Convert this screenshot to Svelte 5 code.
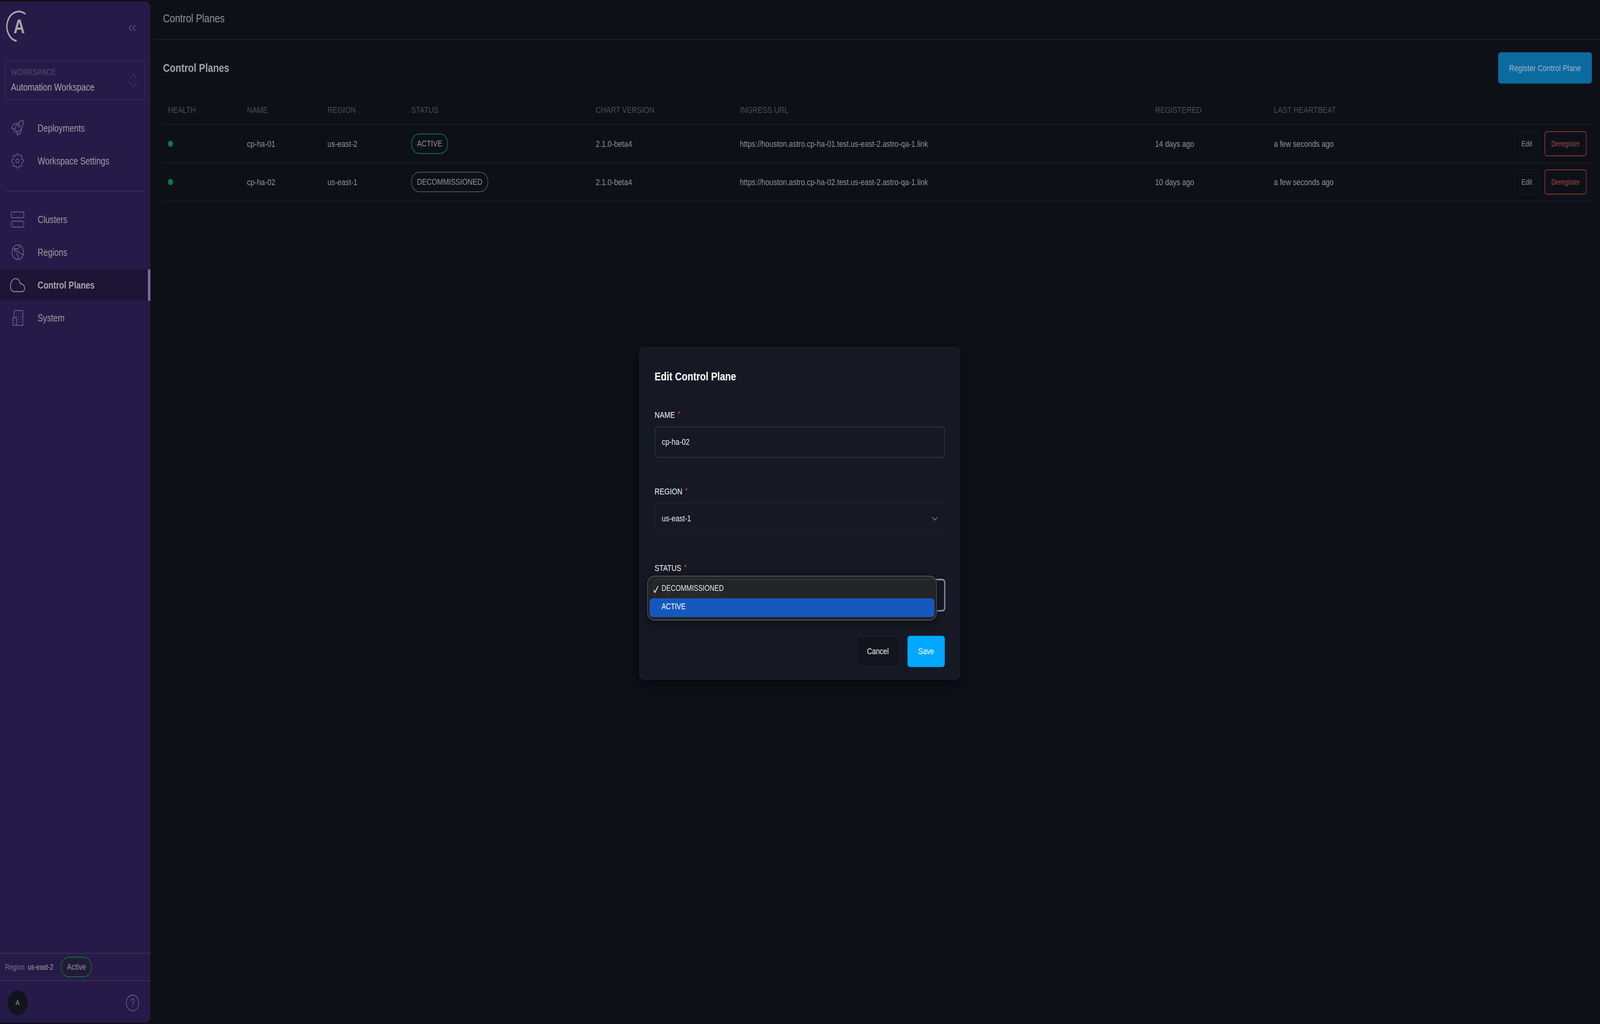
<script>
  // design size of the screen; the page is fitted to the real window below
  // (the window can come out narrower than asked for, 4096 instead of 5106)
  const DESIGN_W = 5106;
  const DESIGN_H = 2622;

  let innerWidth = $state(window.innerWidth);
  let innerHeight = $state(window.innerHeight);
  let fit = $derived(`transform: scale(${innerWidth / DESIGN_W}, ${innerHeight / DESIGN_H})`);

  const mainNav = [
    { label: 'Deployments', icon: 'rocket' },
    { label: 'Workspace Settings', icon: 'cog' }
  ];
  const adminNav = [
    { label: 'Clusters', icon: 'server' },
    { label: 'Regions', icon: 'globe' },
    { label: 'Control Planes', icon: 'cloud', active: true },
    { label: 'System', icon: 'building' }
  ];
  const columns = ['Health', 'Name', 'Region', 'Status', 'Chart Version', 'Ingress URL', 'Registered', 'Last Heartbeat', ''];
  const colWidths = [252, 257, 267, 589, 460, 1325, 379, 500];
  const planes = [
    { name: 'cp-ha-01', region: 'us-east-2', status: 'ACTIVE', chart: '2.1.0-beta4', url: 'https://houston.astro.cp-ha-01.test.us-east-2.astro-qa-1.link', registered: '14 days ago', beat: 'a few seconds ago' },
    { name: 'cp-ha-02', region: 'us-east-1', status: 'DECOMMISSIONED', chart: '2.1.0-beta4', url: 'https://houston.astro.cp-ha-02.test.us-east-2.astro-qa-1.link', registered: '10 days ago', beat: 'a few seconds ago' }
  ];
</script>

<svelte:window bind:innerWidth bind:innerHeight />

{#snippet navIcon(name)}
  {#if name === 'rocket'}
    <svg class="nav-icon" viewBox="26 298 60 60">
      <path d="M74 309C66 309 59 313 54 318C50 323 47 328 47 331L55 338C59 337 64 334 68 329C72 324 75 316 74 309Z" />
      <path d="M53 317C48 316 45 317 43 319L37 328L47 331" />
      <path d="M68 330C68 335 67 339 65 341L55 346L53 336" />
      <path d="M43.300 335l5 5" />
      <circle cx="60.700" cy="321.700" r="3.700" />
    </svg>
  {:else if name === 'cog'}
    <svg class="nav-icon" viewBox="-2.500 -2.500 29 29" style="stroke-width:.9">
      <path d="M10.325 4.317c.426-1.756 2.924-1.756 3.35 0a1.724 1.724 0 002.573 1.066c1.543-.94 3.31.826 2.37 2.37a1.724 1.724 0 001.065 2.572c1.756.426 1.756 2.924 0 3.35a1.724 1.724 0 00-1.066 2.573c.94 1.543-.826 3.31-2.37 2.37a1.724 1.724 0 00-2.572 1.065c-.426 1.756-2.924 1.756-3.35 0a1.724 1.724 0 00-2.573-1.066c-1.543.94-3.31-.826-2.37-2.37a1.724 1.724 0 00-1.065-2.572c-1.756-.426-1.756-2.924 0-3.35a1.724 1.724 0 001.066-2.573c-.94-1.543.826-3.31 2.370-2.370.996.608 2.296.07 2.572-1.065z" />
      <path d="M14.500 12a2.500 2.500 0 11-5 0 2.500 2.500 0 015 0z" />
    </svg>
  {:else if name === 'server'}
    <svg class="nav-icon" viewBox="26 532 60 60">
      <rect x="36" y="542.500" width="40" height="15" rx="4" />
      <rect x="36" y="566.500" width="40" height="15" rx="4" />
      <path d="M44 550h.3M44 574h.3" />
    </svg>
  {:else if name === 'globe'}
    <svg class="nav-icon" viewBox="26 616 60 60">
      <circle cx="56.700" cy="646" r="18.500" />
      <path d="M63.500 628C63 633 60 636 56 637C52 638 47 636 45 636C48 639 48 641 46 643C50 642 56 642 60 645C64 648 68 650 74 653" />
      <path d="M55 648C52 650 55 653 58 655C59 658 57 660 58 664" />
    </svg>
  {:else if name === 'cloud'}
    <svg class="nav-icon" viewBox="26 700 60 60">
      <path d="M45 746.700C38 746.700 33.300 741 33.300 733C33.300 722 41 713.300 50 713.300C57 713.300 62 718 65 727C72 726 78.700 731 78.700 738C78.700 743 75 746.700 70 746.700Z" />
    </svg>
  {:else if name === 'building'}
    <svg class="nav-icon" viewBox="26 784 60 60">
      <path d="M45 813V798a3 3 0 013-3h22a3 3 0 013 3V833H41V816a3 3 0 013-3h6a3 3 0 013 3V833" />
      <path d="M51.700 803.300h.3M59 803.300h.3M65.700 803.300h.3M51.700 810.700h.3M59 810.700h.3M65.700 810.700h.3M59 817.300h.3M65.700 817.300h.3M59 824.700h.3M65.700 824.700h.3M47 819.300h.3M47 826.700h.3" />
    </svg>
  {/if}
{/snippet}

<div class="app" style={fit}>
  <aside class="sidebar">
    <div class="brand">
      <svg class="logo" viewBox="0 0 100 110">
        <path d="M81 36A38 38 0 1 0 53 105" />
        <text x="43" y="85">A</text>
      </svg>
      <svg class="collapse" viewBox="0 0 24 18">
        <path d="M10 1.500 2 9l8 7.500M22 1.500 14 9l8 7.500" />
      </svg>
    </div>

    <div class="workspace">
      <div>
        <div class="ws-label">WORKSPACE</div>
        <div class="ws-name">Automation Workspace</div>
      </div>
      <svg class="updown" viewBox="0 0 26 34">
        <path d="M1 13 13 1l12 12M1 21l12 12 12-12" />
      </svg>
    </div>

    <nav class="nav first">
      {#each mainNav as item}
        <div class="nav-item">
          {@render navIcon(item.icon)}
          <span>{item.label}</span>
        </div>
      {/each}
    </nav>

    <div class="side-rule"></div>

    <nav class="nav">
      {#each adminNav as item}
        <div class="nav-item" class:active={item.active}>
          {@render navIcon(item.icon)}
          <span>{item.label}</span>
        </div>
      {/each}
    </nav>

    <div class="side-foot">
      <div class="region-row">
        <span class="region-key">Region</span>
        <span class="region-val">us-east-2</span>
        <span class="region-badge">Active</span>
      </div>
      <div class="user-row">
        <div class="avatar">A</div>
        <svg class="help" viewBox="0 0 42 42">
          <circle cx="21" cy="21" r="20" />
          <path d="M15.500 16c0-3.500 2.500-5.500 5.500-5.500s5.500 2 5.500 5c0 4.500-5.500 4.500-5.500 9" />
          <path d="M21 30.500h.1" class="dot" />
        </svg>
      </div>
    </div>
  </aside>

  <main class="main">
    <header class="topbar">Control Planes</header>
    <section class="content">
      <div class="title-row">
        <h1>Control Planes</h1>
        <button class="register">Register Control Plane</button>
      </div>

      <table>
        <colgroup>
          {#each colWidths as w}<col style="width:{w}px" />{/each}
          <col />
        </colgroup>
        <thead>
          <tr>
            {#each columns as col}<th>{col}</th>{/each}
          </tr>
        </thead>
        <tbody>
          {#each planes as plane}
            <tr>
              <td><span class="dot-ok"></span></td>
              <td>{plane.name}</td>
              <td>{plane.region}</td>
              <td><span class="pill" class:ok={plane.status === 'ACTIVE'}>{plane.status}</span></td>
              <td>{plane.chart}</td>
              <td>{plane.url}</td>
              <td>{plane.registered}</td>
              <td>{plane.beat}</td>
              <td class="actions">
                <button class="edit">Edit</button>
                <button class="deregister">Deregister</button>
              </td>
            </tr>
          {/each}
        </tbody>
      </table>
    </section>
  </main>

  <div class="overlay">
    <div class="modal">
      <h2>Edit Control Plane</h2>

      <div class="label first-label">NAME <i>*</i></div>
      <div class="field name">cp-ha-02</div>

      <div class="label">REGION <i>*</i></div>
      <div class="field select">
        <span>us-east-1</span>
        <svg class="chev" viewBox="0 0 18 10"><path d="M1 1l8 8 8-8" /></svg>
      </div>

      <div class="label">STATUS <i>*</i></div>
      <div class="field focused">
        <span>DECOMMISSIONED</span>
        <div class="popup">
          <div class="option checked">
            <svg class="check" viewBox="0 0 18 18"><path d="M2 11l4 6L16 1" /></svg>
            DECOMMISSIONED
          </div>
          <div class="option hover">ACTIVE</div>
        </div>
      </div>

      <div class="modal-actions">
        <button class="cancel">Cancel</button>
        <button class="save">Save</button>
      </div>
    </div>
  </div>
</div>

<style>
  :global(html), :global(body) {
    margin: 0;
    overflow: hidden;
    background: #0e1018;
  }

  .app {
    display: flex;
    width: 5106px;
    height: 2622px;
    overflow: hidden;
    position: relative;
    transform-origin: 0 0;
    background: #0e1018;
    font-family: 'Liberation Sans', Arial, sans-serif;
    color: #8e8f92;
    font-size: 22.4px;
  }

  button {
    font-family: inherit;
    cursor: pointer;
  }

  /* sidebar */
  .sidebar {
    width: 480px;
    flex: none;
    margin: 4px 0;
    background: #261b48;
    border-radius: 0 16px 16px 0;
    display: flex;
    flex-direction: column;
    box-sizing: border-box;
  }

  .brand {
    height: 152px;
    flex: none;
    display: flex;
    justify-content: space-between;
    align-items: flex-start;
    box-sizing: border-box;
    padding: 0 46px 0 0;
  }

  .logo {
    width: 100px;
    height: 110px;
    margin-top: -4px;
  }
  .logo path {
    fill: none;
    stroke: #a5a5a8;
    stroke-width: 4.500;
  }
  .logo text {
    font-family: 'Liberation Sans', Arial, sans-serif;
    font-size: 50px;
    fill: #a5a5a8;
    font-weight: 700;
  }

  .collapse {
    width: 24px;
    height: 18px;
    margin-top: 59px;
    fill: none;
    stroke: #6f6290;
    stroke-width: 1.800;
  }

  .workspace {
    flex: none;
    margin: 0 16px;
    height: 100px;
    box-sizing: border-box;
    border: 2px solid #372c56;
    border-radius: 8px;
    padding: 0 24px 0 17px;
    display: flex;
    align-items: center;
    justify-content: space-between;
  }
  .ws-label {
    font-size: 22.4px;
    line-height: 30px;
    color: #54496e;
    margin-top: -2px;
  }
  .ws-name {
    font-size: 25.800px;
    line-height: 36px;
    margin-top: 5px;
    color: #a3a3a6;
  }
  .updown {
    width: 26px;
    height: 34px;
    fill: none;
    stroke: #40345f;
    stroke-width: 1.800;
  }

  .nav {
    display: flex;
    flex-direction: column;
    gap: 4px;
    flex: none;
  }
  .nav.first {
    margin-top: 32px;
  }

  .nav-item {
    height: 80px;
    display: flex;
    align-items: center;
    padding-left: 26px;
    gap: 34px;
    font-size: 25.800px;
    color: #9a9a9e;
    box-sizing: border-box;
  }
  .nav-item.active {
    background: #1e1436;
    border-right: 8px solid #7b6aa0;
    font-weight: 700;
    color: #a3a3a6;
  }
  .nav-icon {
    width: 60px;
    height: 60px;
    flex: none;
    fill: none;
    stroke: #75668f;
    stroke-width: 2;
    stroke-linecap: round;
    stroke-linejoin: round;
  }
  .nav-item.active .nav-icon {
    stroke: #a5a5a8;
  }

  .side-rule {
    flex: none;
    height: 2px;
    margin: 37px 16px 31px;
    background: #372c56;
  }

  .side-foot {
    margin-top: auto;
  }
  .region-row {
    height: 72px;
    box-sizing: border-box;
    border-top: 2px solid #3c3157;
    border-bottom: 2px solid #3c3157;
    display: flex;
    align-items: center;
    padding-left: 16px;
    font-size: 19.700px;
  }
  .region-key {
    color: #75708a;
    margin-right: 10px;
  }
  .region-val {
    color: #a3a3a6;
    margin-right: 24px;
  }
  .region-badge {
    height: 52px;
    box-sizing: border-box;
    border: 2px solid #0d7a3f;
    outline: 1px solid #1d1a2c;
    outline-offset: -3px;
    background: #221b38;
    border-radius: 26px;
    padding: 0 17px;
    display: flex;
    align-items: center;
    font-size: 22.4px;
    color: #8e8b9c;
  }
  .user-row {
    height: 106px;
    box-sizing: border-box;
    display: flex;
    align-items: center;
    justify-content: space-between;
    padding: 6px 36px 0 24px;
  }
  .avatar {
    width: 64px;
    height: 64px;
    border-radius: 50%;
    background: #10151c;
    display: flex;
    align-items: center;
    justify-content: center;
    font-size: 19.200px;
    color: #9a9a9e;
  }
  .help {
    width: 42px;
    height: 42px;
    fill: none;
    stroke: #6f6290;
    stroke-width: 1.800;
    stroke-linecap: round;
  }
  .help .dot {
    stroke-width: 2.800;
  }

  /* main */
  .main {
    flex: 1;
    min-width: 0;
    margin-left: 8px;
    display: flex;
    flex-direction: column;
  }
  .topbar {
    height: 102px;
    flex: none;
    box-sizing: border-box;
    border-bottom: 2px solid #1a202c;
    padding: 0 32px 6px;
    display: flex;
    align-items: center;
    font-size: 30px;
    color: #8e8f92;
  }
  .content {
    padding: 32px 26px 0 32px;
  }
  .title-row {
    display: flex;
    align-items: center;
    justify-content: space-between;
    height: 80px;
  }
  h1 {
    margin: 0;
    font-size: 30px;
    line-height: 36px;
    font-weight: 700;
    color: #a0a0a3;
  }
  .register {
    height: 80px;
    width: 299px;
    padding: 0;
    border: none;
    border-radius: 8px;
    background: #0b6ba0;
    color: #9fb3c0;
    font-size: 22.800px;
  }

  table {
    width: 100%;
    table-layout: fixed;
    border-collapse: collapse;
    margin-top: 31px;
  }
  th {
    height: 74px;
    padding: 0 0 0 16px;
    text-align: left;
    font-weight: 400;
    font-size: 22.900px;
    text-transform: uppercase;
    color: #474d5a;
    border-bottom: 2px solid #1a202c;
    box-sizing: border-box;
  }
  td {
    height: 98px;
    padding: 0 0 0 16px;
    font-size: 22.900px;
    color: #8e8f92;
    border-bottom: 2px solid #1a202c;
    box-sizing: border-box;
    white-space: nowrap;
  }
  .dot-ok {
    display: block;
    width: 16px;
    height: 16px;
    border-radius: 50%;
    background: #0d7a3f;
  }
  .pill {
    display: inline-flex;
    align-items: center;
    height: 52px;
    box-sizing: border-box;
    padding: 0 16.500px;
    border: 2px solid #4a5365;
    border-radius: 26px;
    font-size: 22.4px;
    color: #8e8f92;
  }
  .pill.ok {
    border-color: #0d7a3f;
  }
  .actions {
    padding-right: 17px;
    text-align: right;
    font-size: 0;
  }
  .actions button {
    height: 64px;
    border-radius: 8px;
    font-size: 19.700px;
    padding: 0;
    background: transparent;
  }
  .edit {
    width: 77px;
    border: 2px solid #141820;
    color: #8e8f92;
    margin-right: 18px;
  }
  .deregister {
    width: 134px;
    border: 2px solid #93382c;
    color: #9a4a42;
  }

  /* modal */
  .overlay {
    position: absolute;
    inset: 0;
    display: flex;
    align-items: center;
    justify-content: center;
    padding: 6px 2px 0 0;
  }
  .modal {
    width: 1024px;
    box-sizing: border-box;
    background: #161924;
    border: 2px solid #1d212d;
    border-radius: 14px;
    padding: 56px 47px 30px;
    box-shadow: 0 10px 50px rgba(0, 0, 0, 0.55);
    color: #fff;
    display: flex;
    flex-direction: column;
  }
  h2 {
    margin: 0;
    font-size: 30px;
    line-height: 36px;
    font-weight: 700;
    color: #fff;
  }
  .label {
    height: 26px;
    line-height: 26px;
    margin: 71px 0 19px;
    font-size: 22.4px;
    color: #f2f2f3;
  }
  .first-label {
    margin-top: 65px;
  }
  .label i {
    color: #e0452f;
    font-style: normal;
    vertical-align: 3px;
    font-size: 20px;
    margin-left: 3px;
  }
  .field {
    height: 80px;
    box-sizing: border-box;
    border-radius: 8px;
    padding: 0 21px;
    display: flex;
    align-items: center;
    justify-content: space-between;
    font-size: 22.4px;
    color: #e4e5e8;
    position: relative;
  }
  .field.name {
    border: 2px solid #2d3748;
  }
  .field.select {
    border: 2px solid #1d2230;
  }
  .field.focused {
    border: 2px solid #8a99ad;
    outline: 2px solid #8a99ad;
    color: #c0c4cc;
  }
  .chev {
    width: 18px;
    height: 10px;
    fill: none;
    stroke: #7f8ba0;
    stroke-width: 1.800;
  }
  .popup {
    position: absolute;
    left: -26px;
    top: -12px;
    width: 925px;
    height: 115px;
    box-sizing: border-box;
    border: 2px solid #5f6167;
    outline: 1px solid #000;
    border-radius: 22px;
    background: rgba(36, 37, 40, 0.92);
    backdrop-filter: blur(1.500px);
    box-shadow: 0 6px 24px rgba(0, 0, 0, 0.45);
    padding: 12px 6px;
    display: flex;
    flex-direction: column;
    font-size: 21.300px;
    color: #e9e9ea;
  }
  .option {
    flex: none;
    display: flex;
    align-items: center;
    padding-left: 38px;
    position: relative;
    border-radius: 10px;
    box-sizing: border-box;
  }
  .option.checked {
    height: 44px;
    padding-bottom: 8px;
  }
  .option.hover {
    height: 48px;
    background: #1558bd;
    color: #fff;
    padding-bottom: 6px;
  }
  .check {
    position: absolute;
    left: 11px;
    top: 12px;
    width: 18px;
    height: 18px;
    fill: none;
    stroke: #e9e9ea;
    stroke-width: 2.400;
  }
  .modal-actions {
    display: flex;
    justify-content: flex-end;
    gap: 25px;
    margin-top: 64px;
  }
  .modal-actions button {
    height: 80px;
    border-radius: 8px;
    font-size: 22.4px;
    padding: 0;
  }
  .cancel {
    width: 139px;
    background: #12141e;
    border: 2px solid #1d212d;
    color: #eceded;
  }
  .save {
    width: 119px;
    background: #00a8ff;
    border: none;
    color: #fff;
  }
</style>
